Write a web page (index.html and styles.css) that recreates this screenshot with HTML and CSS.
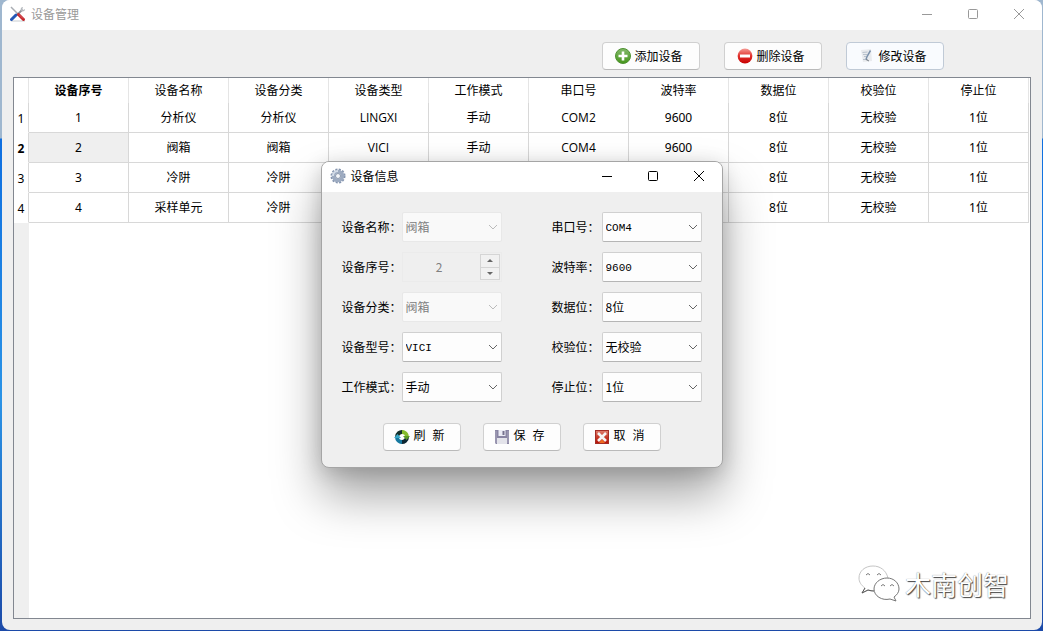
FILE: index.html
```html
<!DOCTYPE html>
<html lang="zh-CN">
<head>
<meta charset="utf-8">
<title>设备管理</title>
<link rel="stylesheet" href="styles.css">
</head>
<body>
<main class="window">
  <header class="titlebar">
    <svg class="app-icon" width="16" height="16" viewBox="0 0 16 16"><path d="M1 1l7 7" stroke="#a9adb3" stroke-width="1.5"/><path d="M7 9l5-5" stroke="#8e949b" stroke-width="1.8"/><path d="M11 5c-1-2 0-4 2-4l-.6 2 1.2 1L15 3c.4 2-2 3-4 2z" fill="#b5b9be"/><path d="M1 15h14" stroke="#c9ccd0"/><path d="M1.5 13.5L6 9" stroke="#2457b5" stroke-width="3" stroke-linecap="round"/><path d="M8.5 8.5l5 5" stroke="#c4272d" stroke-width="3" stroke-linecap="round"/><path d="M9 8.5l4 4" stroke="#e77a7a" stroke-width=".7"/></svg>
    <h1 class="title">设备管理</h1>
    <div class="window-buttons">
      <button aria-label="最小化"><svg width="12" height="12" viewBox="0 0 12 12"><path d="M1 6.5h10"/></svg></button>
      <button aria-label="最大化"><svg width="12" height="12" viewBox="0 0 12 12"><rect x="1.5" y="1.5" width="9" height="9" rx="1"/></svg></button>
      <button aria-label="关闭"><svg width="12" height="12" viewBox="0 0 12 12"><path d="M1 1l10 10M11 1L1 11"/></svg></button>
    </div>
  </header>
  <div class="toolbar">
    <button class="btn"><svg width="16" height="16" viewBox="0 0 16 16"><defs><linearGradient id="green" x2="0" y2="1"><stop stop-color="#83b96b"/><stop offset="1" stop-color="#46961b"/></linearGradient></defs><circle cx="8" cy="8" r="7.5" fill="url(#green)" stroke="#4f9232"/><path d="M8 3.5v9M3.5 8h9" stroke="#fff" stroke-width="2.6"/></svg>添加设备</button>
    <button class="btn"><svg width="16" height="16" viewBox="0 0 16 16"><defs><linearGradient id="red" x2="0" y2="1"><stop stop-color="#f59a94"/><stop offset=".5" stop-color="#e1302c"/><stop offset="1" stop-color="#c80000"/></linearGradient></defs><circle cx="8" cy="8" r="7.4" fill="url(#red)"/><path d="M3 8h10" stroke="#fff" stroke-width="3"/></svg>删除设备</button>
    <button class="btn btn-hot"><svg width="16" height="16" viewBox="0 0 16 16"><path d="M2 2l10-1 1 12-9 1z" fill="#e9ebee"/><path d="M3.500 4.500l5-.5M4 6.500h4M5 8.500h2M4 11.500h5" stroke="#b9c2cd"/><path d="M11.500 2.500L8 8.500l-1 3" fill="none" stroke="#7b91ab" stroke-width="1.500"/><path d="M7 11.500l3 1.500" stroke="#777d84"/></svg>修改设备</button>
  </div>
  <section class="grid">
    <table>
      <colgroup><col class="col-index"><col><col><col><col><col><col><col><col><col><col></colgroup>
      <thead><tr><th></th><th class="current">设备序号</th><th>设备名称</th><th>设备分类</th><th>设备类型</th><th>工作模式</th><th>串口号</th><th>波特率</th><th>数据位</th><th>校验位</th><th>停止位</th></tr></thead>
      <tbody>
        <tr><th>1</th><td>1</td><td>分析仪</td><td>分析仪</td><td class="code">LINGXI</td><td>手动</td><td class="code">COM2</td><td>9600</td><td>8位</td><td>无校验</td><td>1位</td></tr>
        <tr><th class="current">2</th><td class="selected">2</td><td>阀箱</td><td>阀箱</td><td class="code">VICI</td><td>手动</td><td class="code">COM4</td><td>9600</td><td>8位</td><td>无校验</td><td>1位</td></tr>
        <tr><th>3</th><td>3</td><td>冷阱</td><td>冷阱</td><td></td><td></td><td></td><td></td><td>8位</td><td>无校验</td><td>1位</td></tr>
        <tr><th>4</th><td>4</td><td>采样单元</td><td>冷阱</td><td></td><td></td><td></td><td></td><td>8位</td><td>无校验</td><td>1位</td></tr>
      </tbody>
    </table>
    <div class="grid-rest"></div>
  </section>
</main>

<div class="watermark">
  <svg width="44" height="38" viewBox="0 0 44 38" fill="#fff" stroke-linejoin="round"><path d="M7 23l-3 5 6-3c3 1 5 1 8 1 9-1 13-7 12-13C28 5 22 1 15 1 7 1 1 6 1 13c0 4 2 7 6 10z" stroke="#c5c5c5"/><path d="M7 23l-3 5 6-3q3 1 6 1" fill="none" stroke="#555"/><path d="M8 10q2-3 4 0M19 10q2-3 4 0" fill="none" stroke="#777"/><path d="M36 32l2 4-6-2c-8 2-16-3-16-10 0-6 6-11 13-11s12 5 12 11c0 3-2 6-5 8z" stroke="#777"/><path d="M23 21q2-3 4 0M32 21q2-3 4 0" fill="none" stroke="#777"/></svg>
  <span>木南创智</span>
</div>

<div class="window dialog" role="dialog" aria-labelledby="dialog-title">
  <header class="titlebar">
    <svg class="app-icon" width="16" height="16" viewBox="0 0 16 16"><circle cx="8" cy="8" r="6.4" fill="none" stroke="#8494ae" stroke-width="2.2" stroke-dasharray="2 1.35"/><circle cx="8" cy="8" r="4.5" fill="none" stroke="#9dabc1" stroke-width="3.6"/><path d="M3 8a5 5 0 0 1 5-5" fill="none" stroke="#d3dce8" stroke-width="2"/><circle cx="8" cy="8" r="2.5" fill="#f5f7fa" stroke="#71819b" stroke-width=".8"/></svg>
    <h2 class="title" id="dialog-title">设备信息</h2>
    <div class="window-buttons">
      <button aria-label="最小化"><svg width="12" height="12" viewBox="0 0 12 12"><path d="M1 6.5h10"/></svg></button>
      <button aria-label="最大化"><svg width="12" height="12" viewBox="0 0 12 12"><rect x="1.5" y="1.5" width="9" height="9" rx="1"/></svg></button>
      <button aria-label="关闭"><svg width="12" height="12" viewBox="0 0 12 12"><path d="M1 1l10 10M11 1L1 11"/></svg></button>
    </div>
  </header>
  <form class="form">
    <div class="fields">
      <label for="name">设备名称：</label><select id="name" disabled><option>阀箱</option></select>
      <label for="port">串口号：</label><select id="port" class="latin"><option>COM4</option></select>
      <label for="number">设备序号：</label>
      <div class="spin"><input id="number" type="text" value="2" disabled><div class="steps"><button type="button" disabled aria-label="增加"><svg width="6" height="3"><path d="M0 3l3-3 3 3z"/></svg></button><button type="button" disabled aria-label="减少"><svg width="6" height="3"><path d="M0 0l3 3 3-3z"/></svg></button></div></div>
      <label for="baud">波特率：</label><select id="baud" class="latin"><option>9600</option></select>
      <label for="category">设备分类：</label><select id="category" disabled><option>阀箱</option></select>
      <label for="data">数据位：</label><select id="data"><option>8位</option></select>
      <label for="model">设备型号：</label><select id="model" class="latin"><option>VICI</option></select>
      <label for="parity">校验位：</label><select id="parity"><option>无校验</option></select>
      <label for="mode">工作模式：</label><select id="mode"><option>手动</option></select>
      <label for="stop">停止位：</label><select id="stop"><option>1位</option></select>
    </div>
    <div class="actions">
      <button type="button" class="btn"><svg width="16" height="16" viewBox="0 0 16 16"><circle cx="8" cy="8" r="4" fill="#fff"/><path d="M3 8a5 5 0 0 1 6-4.900" fill="none" stroke="#14302b" stroke-width="4"/><path d="M8 3A5 5 0 0 1 13 8" fill="none" stroke="#86bd2c" stroke-width="4"/><path d="M13 8a5 5 0 0 1-6 4.900" fill="none" stroke="#0d2733" stroke-width="4"/><path d="M3 8a5 5 0 0 0 5 5" fill="none" stroke="#1679a0" stroke-width="4"/><path d="M0 9l3.500-4L7 9z" fill="#39a8c8"/><path d="M9 7l3.500 4L16 7z" fill="#5b9d24"/></svg>刷 新</button>
      <button type="button" class="btn"><svg width="16" height="16" viewBox="0 0 16 16"><path d="M1 1h14v14H2l-1-1z" fill="#8985a3"/><path d="M4.500 1h7v6h-7z" fill="#ececf5"/><path d="M8.500 2h2v4h-2z" fill="#77738f"/><path d="M3 9h10v6H3z" fill="#e3e3ea"/><path d="M2 2v12M14 2v12" stroke="#aaa6bd"/></svg>保 存</button>
      <button type="button" class="btn"><svg width="16" height="16" viewBox="0 0 16 16"><defs><linearGradient id="cross" x2="0" y2="1"><stop stop-color="#df8171"/><stop offset=".5" stop-color="#c83c2a"/><stop offset="1" stop-color="#b30f08"/></linearGradient></defs><rect x="1.500" y="1.500" width="13" height="13" fill="url(#cross)" stroke="#a32d25"/><path d="M5 14l3-4 3 4z" fill="#ee6a20"/><path d="M4 4l8 8M12 4l-8 8" stroke="#f5f5f5" stroke-width="2.600"/></svg>取 消</button>
    </div>
  </form>
</div>
</body>
</html>
```
FILE: styles.css
```css
* { box-sizing: border-box; }

body {
  margin: 0;
  height: 100vh;
  padding: 0 1px 1px 2px;
  overflow: hidden;
  background: linear-gradient(#9fb7cf 0, #9fb7cf 138px, #0f6fe0 139px, #2b93e6 400px, #1c4aa8 100%);
  font: 12px/16px "Noto Sans", "Noto Sans CJK SC", sans-serif;
  color: #000;
}

h1, h2 { margin: 0; font: inherit; }
button, select, input { font: inherit; color: inherit; }

.window {
  display: flex;
  flex-direction: column;
  height: 100%;
  border-radius: 8px;
  background: #efefef;
  overflow: hidden;
}

.titlebar {
  display: flex;
  align-items: center;
  height: 30px;
  flex: none;
  padding: 0 0 2px 8px;
  background: #fff;
  color: #999;
  font-family: "Noto Sans CJK SC", sans-serif;
}
.title { margin-left: 5px; flex: 1; }
.window-buttons { display: flex; }
.window-buttons button {
  display: flex;
  justify-content: center;
  align-items: center;
  width: 46px;
  height: 28px;
  padding: 0;
  border: 0;
  background: none;
}
.window-buttons svg { fill: none; stroke: currentColor; }

.toolbar {
  display: flex;
  justify-content: flex-end;
  gap: 24px;
  padding: 12px 98px 7px 0;
}
.btn {
  display: flex;
  justify-content: center;
  align-items: center;
  gap: 3px;
  width: 98px;
  height: 28px;
  padding: 0 4px 0 0;
  border: 1px solid #d0d0d0;
  border-bottom-color: #bababa;
  border-radius: 4px;
  background: #fdfdfd;
  font-family: "Noto Sans CJK SC", sans-serif;
}
.btn-hot { border-color: #c0cad6; background: #f9fbfe; }

.grid {
  flex: 1;
  display: flex;
  flex-direction: column;
  margin: 0 11px 11px;
  border: 1px solid #828790;
  background: #fff;
}
table {
  width: calc(100% - 1px);
  table-layout: fixed;
  border-collapse: separate;
  border-spacing: 0;
  text-align: center;
}
.col-index { width: 15px; }
th, td {
  height: 30px;
  padding: 0;
  border-right: 1px solid #d8d8d8;
  border-bottom: 1px solid #d8d8d8;
  font-weight: normal;
}
thead th { height: 25px; border-bottom: 0; border-right-color: #e5e5e5; }
tbody th { border-bottom-color: #fff; padding-top: 2px; }
.current { font-weight: bold; }
.selected { background: #efefef; }
.code { font-family: "Open Sans", sans-serif; }
.grid-rest { flex: 1; width: 15px; background: #efefef; }

.watermark {
  position: absolute;
  right: 34px;
  bottom: 28px;
  display: flex;
  align-items: center;
  gap: 3px;
  color: #fff;
  font: 26px/38px "Noto Sans CJK SC", sans-serif;
  text-shadow: 1px 1px 1px #444, 0 0 1px #777;
}

.dialog {
  position: absolute;
  top: 161px;
  left: calc(50% - 201px);
  width: 402px;
  height: auto;
  border: 1px solid #a5a5a5;
  box-shadow: 0 28px 48px rgba(0, 0, 0, .35), 0 4px 20px rgba(0, 0, 0, .16);
  font-family: "Noto Sans CJK SC", sans-serif;
}
.dialog .titlebar { color: #000; }

.form { padding: 20px 20px 16px; }
.fields {
  display: grid;
  grid-template-columns: 60px 100px 1fr 100px;
  row-gap: 10px;
  align-items: center;
}
.fields label { white-space: nowrap; }
.fields label:nth-of-type(even) { padding-left: 50px; }
select {
  appearance: none;
  width: 100px;
  height: 30px;
  padding: 0 20px 0 3px;
  border: 1px solid #d0d0d0;
  border-bottom-color: #b5b5b5;
  border-radius: 2px;
  background: #fdfdfd url("data:image/svg+xml,%3Csvg xmlns='http://www.w3.org/2000/svg' width='10' height='6'%3E%3Cpath d='M1 1l4 4 4-4' fill='none' stroke='%23666'/%3E%3C/svg%3E") no-repeat right 3px center;
  color: #000;
}
select:disabled {
  opacity: 1;
  border-color: #e8e8e8;
  background-color: #f9f9f9;
  background-image: url("data:image/svg+xml,%3Csvg xmlns='http://www.w3.org/2000/svg' width='10' height='6'%3E%3Cpath d='M1 1l4 4 4-4' fill='none' stroke='%23bbb'/%3E%3C/svg%3E");
  color: #808080;
}
.latin { padding-top: 2px; font-family: "Liberation Mono", monospace; font-size: 11px; }

.spin {
  display: flex;
  align-items: center;
  width: 100px;
  height: 30px;
  padding-right: 1px;
  border: 1px solid #ebebeb;
}
.spin input {
  flex: 1;
  min-width: 0;
  padding: 0 4px 0 0;
  border: 0;
  background: none;
  text-align: center;
  color: #808080;
}
.steps {
  display: flex;
  flex-direction: column;
  width: 20px;
  height: 26px;
  border: 1px solid #d5d5d5;
}
.steps button {
  flex: 1;
  display: flex;
  justify-content: center;
  align-items: center;
  padding: 0;
  border: 0;
  background: #f1f1f1;
}
.steps button + button { border-top: 1px solid #d5d5d5; }
.steps svg { fill: #666; }

.actions {
  display: flex;
  justify-content: center;
  gap: 22px;
  padding-top: 21px;
}
.actions .btn {
  width: 78px;
  white-space: pre;
  font-family: "Liberation Mono", "Noto Sans CJK SC", monospace;
}
```
